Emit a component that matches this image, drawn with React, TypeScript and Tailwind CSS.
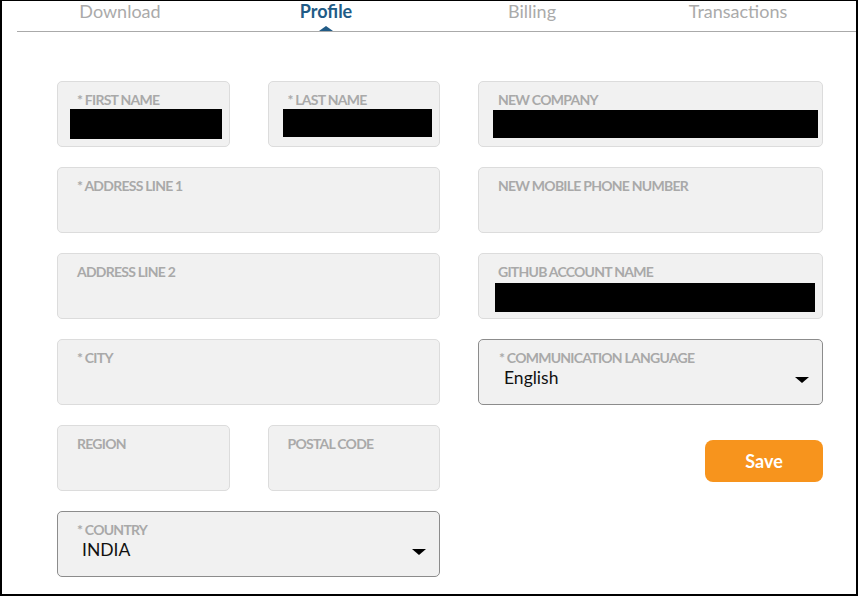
import React from "react";

const font = { fontFamily: "Lato, 'Noto Sans', sans-serif" };

function Label({ text, className = "" }: { text: string; className?: string }) {
  return (
    <div className={"text-[14px] leading-[16px] font-bold uppercase tracking-[-0.75px] text-[#a9a9a9] whitespace-nowrap " + className}>
      {text}
    </div>
  );
}

function Field({
  label,
  redact,
}: {
  label: string;
  redact?: string;
}) {
  return (
    <div className="h-[66px] rounded-[5px] border border-[#dcdcdc] bg-[#f1f1f1] pt-[10px] box-border">
      <Label text={label} className="ml-[19px]" />
      {redact ? <div className={"bg-black " + redact} /> : null}
    </div>
  );
}

function SelectField({ label, value, valueIndent, labelIndent }: { label: string; value: string; valueIndent: string; labelIndent: string }) {
  return (
    <div className="relative h-[66px] rounded-[5px] border border-[#8c8c8c] bg-[#f1f1f1] pt-[10px] box-border">
      <Label text={label} className={labelIndent} />
      <div className={"mt-[1px] text-[17.5px] leading-[22px] text-[#111] " + valueIndent}>{value}</div>
      <div className="absolute right-[13px] top-[37px] w-0 h-0 border-l-[7px] border-r-[7px] border-t-[6px] border-l-transparent border-r-transparent border-t-black" />
    </div>
  );
}

export default function App() {
  const tabs = ["Download", "Profile", "Billing", "Transactions"];
  return (
    <div style={font} className="w-[858px] h-[597px] bg-white">
      <div className="w-[858px] h-[596px] border-t border-l-2 border-r-2 border-b-2 border-black box-border">
        <div className="ml-[15px] border-b border-[#aaaaaa] h-[31px]">
          <div className="grid grid-cols-4 w-[824px] h-[30px]">
            {tabs.map((t) => (
              <div key={t} className="relative flex justify-center">
                <span
                  className={
                    "text-[18px] leading-[20px] " +
                    (t === "Profile" ? "font-bold text-[#215b86]" : "text-[#aaaaaa]")
                  }
                >
                  {t}
                </span>
                {t === "Profile" ? (
                  <div className="absolute bottom-0 left-1/2 -translate-x-1/2 w-0 h-0 border-l-[7px] border-r-[7px] border-b-[5px] border-l-transparent border-r-transparent border-b-[#215b86]" />
                ) : null}
              </div>
            ))}
          </div>
        </div>

        <div className="flex gap-[38px] pl-[55px] pt-[49px]">
          <div className="w-[383px] flex flex-col gap-[20px]">
            <div className="grid grid-cols-2 gap-x-[38px]">
              <Field label="* First Name" redact="mt-[1px] ml-[12px] mr-[7px] h-[30px]" />
              <Field label="* Last Name" redact="mt-[1px] ml-[14px] mr-[7px] h-[28px]" />
            </div>
            <Field label="* Address Line 1" />
            <Field label="Address Line 2" />
            <Field label="* City" />
            <div className="grid grid-cols-2 gap-x-[38px]">
              <Field label="Region" />
              <Field label="Postal Code" />
            </div>
            <SelectField label="* Country" value="INDIA" labelIndent="ml-[19px]" valueIndent="ml-[24px]" />
          </div>

          <div className="w-[345px] flex flex-col gap-[20px]">
            <Field label="New Company" redact="mt-[2px] ml-[14px] mr-[4px] h-[28px]" />
            <Field label="New Mobile Phone Number" />
            <Field label="Github Account Name" redact="mt-[3px] ml-[16px] mr-[7px] h-[29px]" />
            <SelectField label="* Communication Language" value="English" labelIndent="ml-[20px]" valueIndent="ml-[25px]" />
            <div className="flex justify-end mt-[15px]">
              <button className="w-[118px] h-[42px] rounded-[8px] bg-[#f7941d] text-white font-bold text-[18px]">
                Save
              </button>
            </div>
          </div>
        </div>
      </div>
    </div>
  );
}
